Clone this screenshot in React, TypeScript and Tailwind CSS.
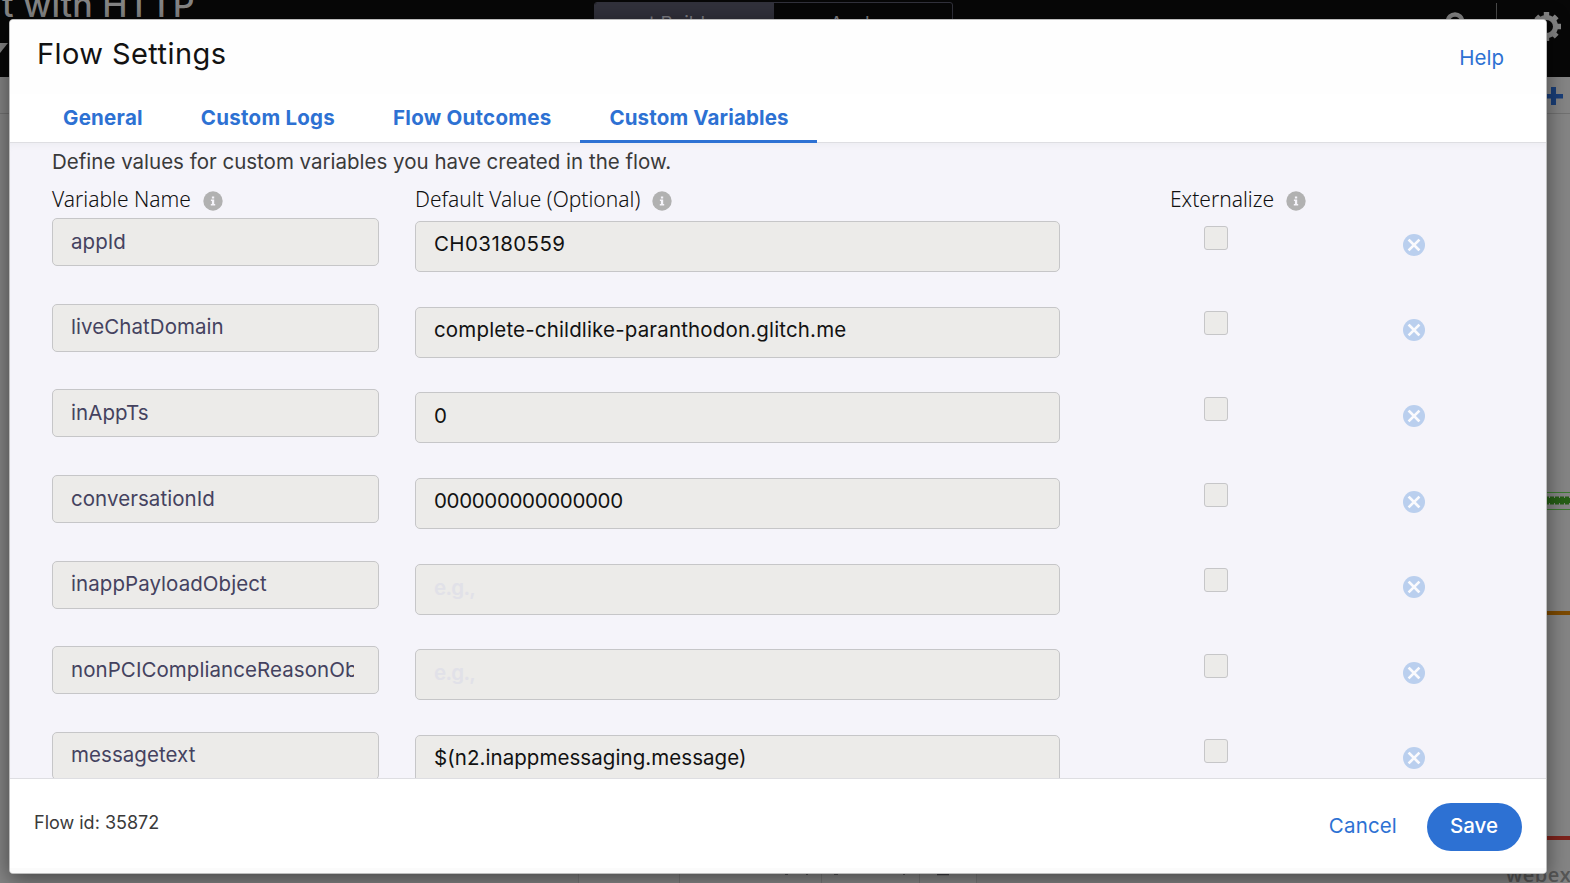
import { type ReactNode } from "react";

type Variable = { name: string; value: string; tracking?: string };

const variables: Variable[] = [
  { name: "appId", value: "CH03180559", tracking: "tracking-[0.4px]" },
  { name: "liveChatDomain", value: "complete-childlike-paranthodon.glitch.me", tracking: "tracking-[0.16px]" },
  { name: "inAppTs", value: "0" },
  { name: "conversationId", value: "000000000000000", tracking: "tracking-[-0.35px]" },
  { name: "inappPayloadObject", value: "" },
  { name: "nonPCIComplianceReasonObject", value: "" },
  { name: "messagetext", value: "$(n2.inappmessaging.message)", tracking: "tracking-[0.06px]" },
];

const tabs = ["General", "Custom Logs", "Flow Outcomes", "Custom Variables"];

function InfoIcon() {
  return (
    <svg viewBox="0 0 20 20" className="mt-[4px] size-5 shrink-0" aria-hidden="true">
      <circle cx="10" cy="10" r="9.7" fill="#b1b1b1" />
      <path d="M8.9 5.4h2.3v2H8.9zM7.9 8.6h3.3v4.5h1v1.4H7.8v-1.4h1.1V10h-1z" fill="#f5f4fa" />
    </svg>
  );
}

function RemoveIcon() {
  return (
    <svg viewBox="0 0 22 22" className="size-[22px]" aria-hidden="true">
      <circle cx="11" cy="11" r="11" fill="#bacfee" />
      <path d="M6.500 6.500l9 9M15.500 6.500l-9 9" stroke="#fafafd" strokeWidth="2.6" strokeLinecap="square" />
    </svg>
  );
}

function ColumnLabel({ children }: { children: ReactNode }) {
  return (
    <div className="flex h-7 items-center gap-3 font-['Noto_Sans',sans-serif] text-[21px] leading-[28px] font-light text-[#101010]">
      <span>{children}</span>
      <InfoIcon />
    </div>
  );
}

function VariableRow({ variable }: { variable: Variable }) {
  return (
    <div className="grid h-[85.66px] shrink-0 grid-cols-[363px_789px_199px_22px] items-start">
      <div className="flex h-12 w-[327px] rounded-[5px] border border-[#c6c6c8] bg-[#ecebe9] px-[18px] pt-[8.55px]">
        <span className="h-8 max-w-[283px] overflow-hidden text-[20.5px] leading-[28px] tracking-[0.06px] whitespace-nowrap text-[#44425f]">
          {variable.name}
        </span>
      </div>
      <div className="mt-[3px] h-[51px] w-[645px] rounded-[5px] border border-[#c6c6c8] bg-[#ecebe9] px-[18px]">
        {variable.value ? (
          <div className={`pt-[8.25px] text-[20.5px] leading-[28px] text-[#121212] ${variable.tracking ?? ""}`}>
            {variable.value}
          </div>
        ) : (
          <div className="pt-[9px] text-[20.5px] leading-[28px] font-semibold tracking-[-0.7px] text-[#e1e1e8]">e.g.,</div>
        )}
      </div>
      <div className="mt-[7.54px] size-6 rounded-[3px] border border-[#c6c6c8] bg-[#ecebe9]" />
      <div className="mt-[15.54px]">
        <RemoveIcon />
      </div>
    </div>
  );
}

function Backdrop() {
  return (
    <div className="flex h-full flex-col bg-[#858585]">
      <header className="relative h-[77px] shrink-0 overflow-hidden bg-[#070707]">
        <div className="absolute top-[-15px] left-[2px] text-[34px] leading-[40px] font-medium tracking-[0.25px] whitespace-nowrap text-[#858585]">
          t with HTTP
        </div>
        <svg className="absolute top-[43px] left-0" width="9" height="10" aria-hidden="true">
          <path d="M-8 0H8L0 10z" fill="#858585" />
        </svg>
        <div className="absolute top-[2px] left-[594px] flex h-9 w-[359px] overflow-hidden rounded-[3px] border border-[#31313b] text-[19px] leading-7 text-[#7f7f85]">
          <div className="w-[179px] bg-[#31313b] pt-[7px] pl-[54px]">t Builder</div>
          <div className="grow pt-[7px] pl-[56px]">Analyze</div>
        </div>
        <svg className="absolute top-[12px] left-[1446px]" width="18" height="12" aria-hidden="true">
          <path d="M2 9a7 6.500 0 0 1 14 0" fill="none" stroke="#858585" strokeWidth="4.5" />
        </svg>
        <div className="absolute top-[3px] left-[1496px] h-10 w-px bg-[#4a4a4a]" />
        <svg className="absolute top-[12px] left-[1532px]" width="29" height="29" viewBox="-14.5 -14.5 29 29" aria-hidden="true">
          <circle r="9" fill="none" stroke="#858585" strokeWidth="5" />
          <path
            d="M0-14.500V-9M0 9V14.500M-14.500 0H-9M9 0H14.500M-10.200-10.200L-7-7M7 7L10.200 10.200M10.200-10.200L7-7M-7 7L-10.200 10.200"
            stroke="#858585"
            strokeWidth="5.4"
          />
        </svg>
      </header>
      <div className="relative grow overflow-hidden">
        <div className="h-[37px] border-b border-[#727272] bg-[#858585]" />
        <svg className="absolute top-[10px] left-[1544px]" width="19" height="18" aria-hidden="true">
          <path d="M0 7H19V11.500H0zM7 0h5v18H7z" fill="#1a3f7a" />
        </svg>
        <svg className="absolute top-[415px] left-[1540px]" width="30" height="20" aria-hidden="true">
          <path d="M0 .500H30M0 17.500H30" stroke="#3c7a31" />
          <path d="M0 8.500H30" stroke="#265f16" strokeWidth="5" />
          <path d="M0 8.500H30" stroke="#265f16" strokeWidth="8" strokeDasharray="4 1" />
        </svg>
        <div className="absolute top-[534px] right-0 h-1 w-8 bg-[#7d4a00]" />
        <div className="absolute top-[759px] right-0 h-1 w-8 bg-[#7e231c]" />
        <div className="absolute top-[784px] left-[1506px] font-['Open_Sans',sans-serif] text-[20px] leading-7 font-semibold tracking-[0.5px] text-[#575757]">
          webex
        </div>
        <div className="absolute top-[790px] left-[578px] flex h-5 w-[399px] border-x border-[#7a7a7a] bg-[#8a8a8a]">
          <div className="w-[101px] border-r border-[#7a7a7a]" />
          <div className="w-[142px] border-r border-[#7a7a7a]" />
          <div className="w-[98px] border-r border-[#7a7a7a]" />
        </div>
        <svg className="absolute top-[796px] left-[780px]" width="180" height="4" aria-hidden="true">
          <path d="M5 1h3M26 1h2M54 1h4M123 1h2M157 1.500h12" stroke="#3d3d42" strokeWidth="1.5" />
        </svg>
      </div>
    </div>
  );
}

export default function App() {
  return (
    <div className="relative h-[883px] w-[1570px] overflow-hidden font-['Inter',sans-serif]">
      <Backdrop />
      <div
        role="dialog"
        className="absolute top-[19px] left-[9px] flex h-[855px] w-[1538px] flex-col overflow-hidden rounded-[4px] border border-[#bdbdbd] bg-white shadow-[0_5px_22px_rgba(0,0,0,0.5)]"
      >
        <div className="flex h-[74px] shrink-0 justify-between bg-[#fefefe] pr-[42px] pl-[27px]">
          <h1 className="pt-[14px] text-[29px] leading-[40px] tracking-[0.42px] text-[#121212]">Flow Settings</h1>
          <a className="pt-6 text-[20.5px] leading-7 text-[#2d71d3]">Help</a>
        </div>
        <nav className="flex h-[49px] shrink-0 border-b border-[#dedee2] pl-6 text-[20.5px] leading-[28px] font-bold tracking-[0.25px] text-[#2d71d3]">
          {tabs.map((tab, i) => (
            <div
              key={tab}
              className={
                i === 3
                  ? "h-[49px] w-[237px] border-b-[3px] border-[#2d71d3] px-[29px] pt-[10px] tracking-[0.15px] whitespace-nowrap"
                  : "h-[49px] px-[29px] pt-[10px]"
              }
            >
              {tab}
            </div>
          ))}
        </nav>
        <main className="flex h-[635px] shrink-0 flex-col overflow-hidden bg-[#f5f4fa] pl-[42px] shadow-[inset_0_6px_6px_-4px_#ececf1]">
          <p className="h-[42px] shrink-0 pt-[5px] text-[20.5px] leading-[28px] text-[#3a3a3a]">
            Define values for custom variables you have created in the flow.
          </p>
          <div className="grid h-[33px] shrink-0 grid-cols-[363px_755px_1fr]">
            <ColumnLabel>Variable Name</ColumnLabel>
            <ColumnLabel>Default Value (Optional)</ColumnLabel>
            <ColumnLabel>Externalize</ColumnLabel>
          </div>
          {variables.map((v) => (
            <VariableRow key={v.name} variable={v} />
          ))}
        </main>
        <footer className="flex grow items-start justify-between border-t border-[#dedee2] pr-6 pl-6 shadow-[inset_0_-5px_0_#fbfbfb]">
          <span className="pt-[29.6px] text-[18px] leading-7 text-[#3a3a3a]">Flow id: 35872</span>
          <div className="flex items-center gap-[30px] pt-6 text-[20.5px]">
            <button className="pb-[2px] tracking-[0.15px] text-[#2d71d3]">Cancel</button>
            <button className="h-12 w-[95px] rounded-full bg-[#2d71d3] pr-px pb-[2px] font-medium text-white">Save</button>
          </div>
        </footer>
      </div>
    </div>
  );
}
